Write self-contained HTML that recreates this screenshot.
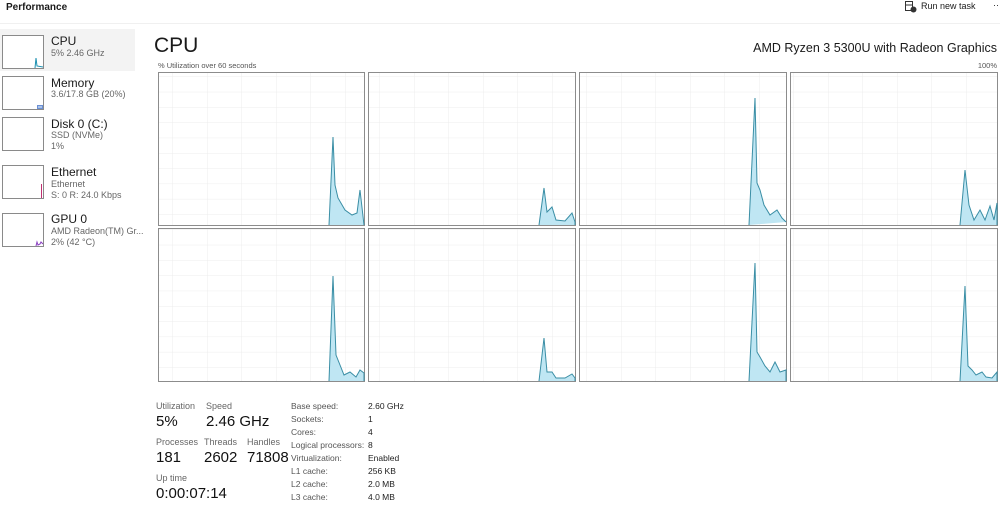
<!DOCTYPE html>
<html><head><meta charset="utf-8"><style>
*{margin:0;padding:0;box-sizing:border-box}
body{width:1000px;height:515px;background:#fff;font-family:"Liberation Sans",sans-serif;color:#1a1a1a;position:relative;overflow:hidden}
.a{position:absolute;white-space:nowrap}
.side{position:absolute;left:0;width:135px;height:42px}
.thumb{position:absolute;left:2px;width:42px;height:34px;border:1px solid #8a8a8a;background:#fff}
.t1{font-size:12px;left:51px}
.t2{font-size:9px;color:#666;left:51px}
.lab{font-size:9px;color:#666}
.big{font-size:15px;color:#111}
.k{font-size:8.5px;color:#555}
.v{font-size:8.5px;color:#222}
</style></head><body>
<div class="a" style="left:6px;top:2px;font-size:10px;font-weight:bold">Performance</div>
<div style="position:absolute;left:0;top:23px;width:1000px;height:1px;background:#f0f0f0"></div>
<svg class="a" style="left:905px;top:1px" width="12" height="12" viewBox="0 0 12 12"><rect x="0.5" y="0.5" width="7" height="9" fill="none" stroke="#333"/><line x1="0.5" y1="4" x2="7.5" y2="4" stroke="#333"/><circle cx="8.5" cy="8.5" r="3" fill="#333"/></svg>
<div class="a" style="left:921px;top:1px;font-size:9px">Run new task</div>
<div class="a" style="left:993px;top:0px;font-size:9px">··</div>

<div class="side" style="top:29px;background:#f3f3f3"></div>
<div class="thumb" style="top:35px"><svg width="40" height="32"><polyline points="32,32 33,22 34,30 40,31" fill="none" stroke="#1a8fb0"/></svg></div>
<div class="a t1" style="top:34px">CPU</div><div class="a t2" style="top:48px">5% 2.46 GHz</div>
<div class="thumb" style="top:76px"><div style="position:absolute;right:0;bottom:0;width:6px;height:4px;background:#aac4ea;border:1px solid #6b8fd4"></div></div>
<div class="a t1" style="top:76px">Memory</div><div class="a t2" style="top:89px">3.6/17.8 GB (20%)</div>
<div class="thumb" style="top:117px"></div>
<div class="a t1" style="top:117px">Disk 0 (C:)</div><div class="a t2" style="top:130px">SSD (NVMe)</div><div class="a t2" style="top:141px">1%</div>
<div class="thumb" style="top:165px"><div style="position:absolute;right:1px;bottom:0;width:1px;height:14px;background:#c03070"></div></div>
<div class="a t1" style="top:165px">Ethernet</div><div class="a t2" style="top:179px">Ethernet</div><div class="a t2" style="top:190px">S: 0 R: 24.0 Kbps</div>
<div class="thumb" style="top:213px"><svg width="40" height="32"><polyline points="33,32 34,28 35,31 37,30 38,28 40,30" fill="none" stroke="#8a3fc0"/></svg></div>
<div class="a t1" style="top:212px">GPU 0</div><div class="a t2" style="top:226px">AMD Radeon(TM) Gr...</div><div class="a t2" style="top:237px">2% (42 °C)</div>

<div class="a" style="left:154px;top:34px;font-size:21px">CPU</div>
<div class="a" style="right:3px;top:41px;font-size:12.5px">AMD Ryzen 3 5300U with Radeon Graphics</div>
<div class="a" style="left:158px;top:61px;font-size:7.5px;color:#555">% Utilization over 60 seconds</div>
<div class="a" style="right:3px;top:61px;font-size:7.5px;color:#555">100%</div>

<svg class="a" style="left:0;top:0" width="1000" height="400">
<defs>
<pattern id="g" width="34.5" height="15.3" patternUnits="userSpaceOnUse" x="0" y="0">
<path d="M0 0H34.5M0 0V15.3" stroke="#ececec" stroke-width="1" fill="none"/></pattern>
</defs>
<g fill="url(#g)" stroke="#8c8c8c" stroke-width="1">
<rect x="158.5" y="72.5" width="206" height="153"/><rect x="368.5" y="72.5" width="207" height="153"/>
<rect x="579.5" y="72.5" width="207" height="153"/><rect x="790.5" y="72.5" width="207" height="153"/>
<rect x="158.5" y="228.5" width="206" height="153"/><rect x="368.5" y="228.5" width="207" height="153"/>
<rect x="579.5" y="228.5" width="207" height="153"/><rect x="790.5" y="228.5" width="207" height="153"/>
</g>
<g fill="#bfe6f3" stroke="#3a8ea5" stroke-width="1">
<polyline points="329,225 333,137 335,185 338,198 345,210 352,215 357,213 360,190 364,225"/>
<polyline points="539,225 544,188 547,212 552,207 556,220 565,221 572,213 575,222 575,225"/>
<polyline points="749,225 755,98 757,183 760,190 764,205 770,215 777,210 782,218 786,222"/>
<polyline points="960,225 965,170 969,205 974,220 980,210 985,220 990,206 994,220 997,203 997,225"/>
<polyline points="329,381 333,276 336,355 340,365 344,375 350,372 356,377 360,370 364,373 364,381"/>
<polyline points="539,381 544,338 547,372 552,372 556,378 565,378 572,374 575,378 575,381"/>
<polyline points="749,381 755,263 757,352 760,357 765,366 770,372 775,362 780,372 786,370 786,381"/>
<polyline points="960,381 965,286 968,366 972,370 976,375 982,372 986,377 992,378 997,372 997,381"/>
</g>
</svg>

<div class="a lab" style="left:156px;top:401px">Utilization</div>
<div class="a lab" style="left:206px;top:401px">Speed</div>
<div class="a big" style="left:156px;top:413px">5%</div>
<div class="a big" style="left:206px;top:413px">2.46 GHz</div>
<div class="a lab" style="left:156px;top:437px">Processes</div>
<div class="a lab" style="left:204px;top:437px">Threads</div>
<div class="a lab" style="left:247px;top:437px">Handles</div>
<div class="a big" style="left:156px;top:449px">181</div>
<div class="a big" style="left:204px;top:449px">2602</div>
<div class="a big" style="left:247px;top:449px">71808</div>
<div class="a lab" style="left:156px;top:473px">Up time</div>
<div class="a big" style="left:156px;top:485px">0:00:07:14</div>

<div class="a k" style="left:291px;top:401px">Base speed:</div><div class="a v" style="left:368px;top:401px">2.60 GHz</div>
<div class="a k" style="left:291px;top:414px">Sockets:</div><div class="a v" style="left:368px;top:414px">1</div>
<div class="a k" style="left:291px;top:427px">Cores:</div><div class="a v" style="left:368px;top:427px">4</div>
<div class="a k" style="left:291px;top:440px">Logical processors:</div><div class="a v" style="left:368px;top:440px">8</div>
<div class="a k" style="left:291px;top:453px">Virtualization:</div><div class="a v" style="left:368px;top:453px">Enabled</div>
<div class="a k" style="left:291px;top:466px">L1 cache:</div><div class="a v" style="left:368px;top:466px">256 KB</div>
<div class="a k" style="left:291px;top:479px">L2 cache:</div><div class="a v" style="left:368px;top:479px">2.0 MB</div>
<div class="a k" style="left:291px;top:492px">L3 cache:</div><div class="a v" style="left:368px;top:492px">4.0 MB</div>
</body></html>
